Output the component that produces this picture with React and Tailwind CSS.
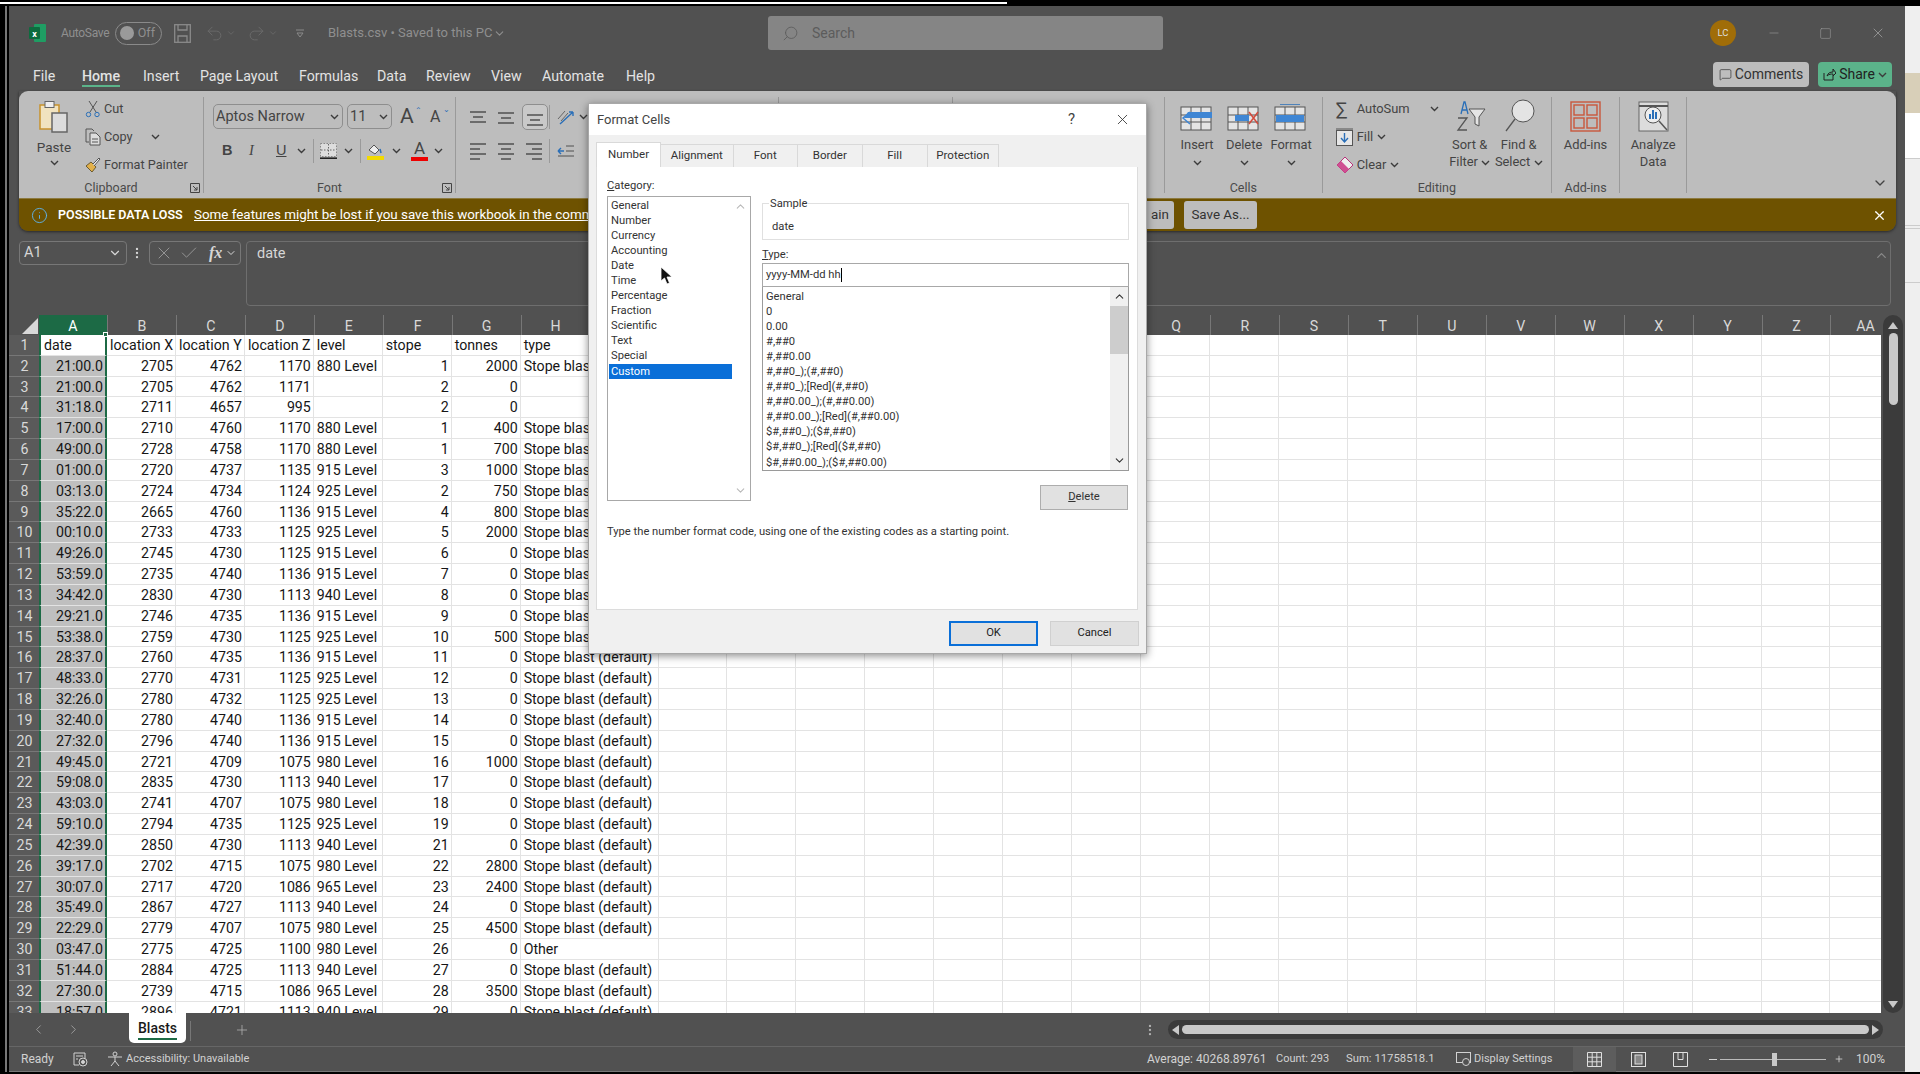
import React from "react";
import { ChevronDown, ChevronUp, ChevronLeft, ChevronRight, X, Minus, Plus, Square, Search, Undo2, Redo2, MessageSquare, Check, EllipsisVertical, Info } from "lucide-react";

const colNames = ["A","B","C","D","E","F","G","H","I","J","K","L","M","N","O","P","Q","R","S","T","U","V","W","X","Y","Z","AA"];
const sb = "Stope blast (default)";
const rows = [
  ["21:00.0",2705,4762,1170,"880 Level",1,2000,sb],
  ["21:00.0",2705,4762,1171,"",2,0,""],
  ["31:18.0",2711,4657,995,"",2,0,""],
  ["17:00.0",2710,4760,1170,"880 Level",1,400,sb],
  ["49:00.0",2728,4758,1170,"880 Level",1,700,sb],
  ["01:00.0",2720,4737,1135,"915 Level",3,1000,sb],
  ["03:13.0",2724,4734,1124,"925 Level",2,750,sb],
  ["35:22.0",2665,4760,1136,"915 Level",4,800,sb],
  ["00:10.0",2733,4733,1125,"925 Level",5,2000,sb],
  ["49:26.0",2745,4730,1125,"915 Level",6,0,sb],
  ["53:59.0",2735,4740,1136,"915 Level",7,0,sb],
  ["34:42.0",2830,4730,1113,"940 Level",8,0,sb],
  ["29:21.0",2746,4735,1136,"915 Level",9,0,sb],
  ["53:38.0",2759,4730,1125,"925 Level",10,500,sb],
  ["28:37.0",2760,4735,1136,"915 Level",11,0,sb],
  ["48:33.0",2770,4731,1125,"925 Level",12,0,sb],
  ["32:26.0",2780,4732,1125,"925 Level",13,0,sb],
  ["32:40.0",2780,4740,1136,"915 Level",14,0,sb],
  ["27:32.0",2796,4740,1136,"915 Level",15,0,sb],
  ["49:45.0",2721,4709,1075,"980 Level",16,1000,sb],
  ["59:08.0",2835,4730,1113,"940 Level",17,0,sb],
  ["43:03.0",2741,4707,1075,"980 Level",18,0,sb],
  ["59:10.0",2794,4735,1125,"925 Level",19,0,sb],
  ["42:39.0",2850,4730,1113,"940 Level",21,0,sb],
  ["39:17.0",2702,4715,1075,"980 Level",22,2800,sb],
  ["30:07.0",2717,4720,1086,"965 Level",23,2400,sb],
  ["35:49.0",2867,4727,1113,"940 Level",24,0,sb],
  ["22:29.0",2779,4707,1075,"980 Level",25,4500,sb],
  ["03:47.0",2775,4725,1100,"980 Level",26,0,"Other"],
  ["51:44.0",2884,4725,1113,"940 Level",27,0,sb],
  ["27:30.0",2739,4715,1086,"965 Level",28,3500,sb],
  ["18:57.0",2896,4721,1113,"940 Level",29,0,sb],
];
const categories = ["General","Number","Currency","Accounting","Date","Time","Percentage","Fraction","Scientific","Text","Special","Custom"];
const formats = ["General","0","0.00","#,##0","#,##0.00","#,##0_);(#,##0)","#,##0_);[Red](#,##0)","#,##0.00_);(#,##0.00)","#,##0.00_);[Red](#,##0.00)","$#,##0_);($#,##0)","$#,##0_);[Red]($#,##0)","$#,##0.00_);($#,##0.00)"];
const dialogTabs = [["Alignment","w-[72.5px]"],["Font","w-[64.5px]"],["Border","w-[64.6px]"],["Fill","w-[65px]"],["Protection","w-[71.4px]"]];
const menuTabs = [["File","w-[49px]"],["Home","w-[61px]"],["Insert","w-[57px]"],["Page Layout","w-[99px]"],["Formulas","w-[78px]"],["Data","w-[49px]"],["Review","w-[65px]"],["View","w-[51px]"],["Automate","w-[84px]"],["Help","w-[40px]"]];

const Chev = ({ className = "" }) => (
  <svg width="9" height="6" viewBox="0 0 9 6" className={className} fill="none" stroke="#3c3c3c" strokeWidth="1.4"><path d="M1 1l3.5 3.5L8 1" /></svg>
);

const Lines = ({ widths, bold }) => (
  <svg width="20" height="18" viewBox="0 0 20 18" stroke="#505050" strokeWidth="1.5">
    {widths.map((w, i) => (
      <line key={i} x1={w[0]} x2={w[1]} y1={bold + i * 5} y2={bold + i * 5} />
    ))}
  </svg>
);

const GridIcon = ({ children }) => (
  <svg width="34" height="28" viewBox="0 0 34 28" fill="none">
    <rect x="1" y="3" width="30" height="23" fill="#e4e4e4" stroke="#555" />
    <path d="M11 3v23M21 3v23M1 11h30M1 18h30" stroke="#555" />
    {children}
  </svg>
);

const RibbonGroup = ({ className, label, launcher, children }) => (
  <div className={`h-[96px] mt-[6px] border-r border-[#9a9a9a] flex flex-col shrink-0 relative ${className}`}>
    <div className="flex-1 flex min-h-0">{children}</div>
    <div className="h-[10px] leading-[10px] text-center text-[12.5px] text-[#4a4a4a]">{label}</div>
    {launcher && (
      <svg width="10" height="10" viewBox="0 0 10 10" fill="none" stroke="#444" className="absolute right-[3px] bottom-[0px]">
        <path d="M.5 9.5V.5h9v9zM3 3l4 4M7 4v3H4" />
      </svg>
    )}
  </div>
);

const BigBtn = ({ icon, lines, className }) => (
  <div className={`flex flex-col items-center shrink-0 ${className}`}>
    <div className="h-[32px] mt-[3px] flex items-end">{icon}</div>
    <div className="mt-[4px] text-[12.9px] leading-[17px] text-center text-[#444] whitespace-nowrap">{lines}</div>
  </div>
);

function Ribbon() {
  return (
    <div className="h-[107px] bg-[#bdbdbd] rounded-t-[9px] flex relative">
      <RibbonGroup className="w-[185px]" label="Clipboard" launcher>
        <div className="ml-[15px] w-[40px] flex flex-col items-center">
          <svg width="30" height="34" viewBox="0 0 30 34" fill="none" className="mt-[3px]">
            <rect x="1" y="5" width="19" height="24" fill="#f1e3bf" stroke="#c8922c" strokeWidth="1.5" />
            <rect x="6" y="1.5" width="9" height="6" fill="#eee" stroke="#666" />
            <rect x="13" y="13" width="15" height="19" fill="#dcdcdc" stroke="#666" strokeWidth="1.5" />
          </svg>
          <div className="mt-[5px] text-[13.5px] leading-[16px] text-[#444]">Paste</div>
          <Chev className="mt-[5px]" />
        </div>
        <div className="ml-[11px] flex flex-col gap-[4px] text-[#444] text-[12.7px] whitespace-nowrap">
          <div className="h-[24px] flex items-center">
            <svg width="16" height="18" viewBox="0 0 16 18" fill="none" stroke="#555" className="mr-[3px]">
              <path d="M4 1l7 11M12 1L5 12" /><circle cx="3.5" cy="14.5" r="2.2" stroke="#2a6fb8" /><circle cx="12" cy="14.5" r="2.2" stroke="#2a6fb8" />
            </svg>
            Cut
          </div>
          <div className="h-[24px] flex items-center">
            <svg width="16" height="18" viewBox="0 0 16 18" fill="none" stroke="#555" className="mr-[3px]">
              <path d="M4 14H1V1h6l2 2" /><path d="M5 5h6l4 4v8H5zM7 11h6M7 14h6" fill="#ddd" />
            </svg>
            Copy
            <Chev className="ml-[18px]" />
          </div>
          <div className="h-[24px] flex items-center">
            <svg width="16" height="16" viewBox="0 0 16 16" fill="none" className="mr-[3px]">
              <path d="M1 9l6 6 4-5-5-5z" fill="#e2b04a" stroke="#6a5a30" /><path d="M8 7l6-6 1 1-6 7" fill="#eee" stroke="#555" />
            </svg>
            Format Painter
          </div>
        </div>
      </RibbonGroup>

      <RibbonGroup className="w-[252px]" label="Font" launcher>
        <div className="pl-[9px] pt-[7px] flex flex-col text-[#444]">
          <div className="flex items-center h-[25px]">
            <div className="w-[130px] h-[25px] border border-[#8e8e8e] rounded-[5px] flex items-center justify-between px-[2px] text-[14.5px]">
              <span className="whitespace-nowrap">Aptos Narrow</span><Chev className="mr-[1px]" />
            </div>
            <div className="ml-[4px] w-[45px] h-[25px] border border-[#8e8e8e] rounded-[5px] flex items-center justify-between px-[2px] text-[14.5px]">
              <span>11</span><Chev className="mr-[1px]" />
            </div>
            <div className="ml-[8px] w-[17px] text-[21px] leading-none relative">A<span className="absolute right-[-5px] top-[1px] text-[8px] text-[#2a6fb8]">⌃</span></div>
            <div className="ml-[13px] w-[16px] text-[16px] leading-none relative">A<span className="absolute right-[-4px] top-[-3px] text-[8px] text-[#2a6fb8]">⌄</span></div>
          </div>
          <div className="flex items-center h-[24px] mt-[10px]">
            <span className="ml-[9px] w-[11px] font-bold text-[14.5px] font-['Liberation_Sans',sans-serif]">B</span>
            <span className="ml-[16px] w-[9px] italic text-[14.5px] font-['Liberation_Serif',serif]">I</span>
            <span className="ml-[18px] w-[11px] underline text-[14.5px] font-['Liberation_Sans',sans-serif]">U</span>
            <Chev className="ml-[10px]" />
            <div className="ml-[7px] w-px h-[24px] bg-[#9a9a9a]" />
            <svg width="17" height="16" viewBox="0 0 17 16" className="ml-[6px]" fill="none">
              <rect x=".5" y=".5" width="16" height="13" fill="#ddd" stroke="#888" strokeDasharray="1.5 1.5" />
              <path d="M8.5 1v12M1 7h15" stroke="#666" strokeDasharray="1.5 1.5" /><path d="M0 15.2h17" stroke="#222" strokeWidth="1.6" />
            </svg>
            <Chev className="ml-[7px]" />
            <div className="ml-[7px] w-px h-[24px] bg-[#9a9a9a]" />
            <svg width="17" height="18" viewBox="0 0 17 18" className="ml-[6px]" fill="none">
              <path d="M2 8l5-5 5 5-4 4z" fill="#eee" stroke="#555" /><path d="M13 7l1 4" stroke="#2a6fb8" strokeWidth="1.5" /><rect y="14" width="17" height="4" fill="#f2da00" />
            </svg>
            <Chev className="ml-[8px]" />
            <div className="ml-[10px] w-[17px] h-[20px] flex flex-col items-center text-[17px] leading-[15px]">
              A<div className="w-[17px] h-[4px] bg-[#ee0000] mt-[1px]" />
            </div>
            <Chev className="ml-[6px]" />
          </div>
        </div>
      </RibbonGroup>

      <RibbonGroup className="w-[322.6px]" label="Alignment">
        <div className="pl-[12px] pt-[7px] flex flex-col">
          <div className="flex items-center h-[25px]">
            <Lines widths={[[2, 18], [5, 15], [2, 18]]} bold={4} />
            <div className="ml-[8px]"><Lines widths={[[2, 18], [5, 15], [2, 18]]} bold={5} /></div>
            <div className="ml-[6px] w-[26px] h-[26px] border border-[#8e8e8e] rounded-[5px] bg-[#c9c9c9] flex items-center justify-center"><Lines widths={[[2, 18], [5, 15], [2, 18]]} bold={7} /></div>
            <div className="ml-[1px] w-px h-[24px] bg-[#9a9a9a]" />
            <svg width="19" height="18" viewBox="0 0 19 18" className="ml-[6px]" fill="none"><path d="M2 11l7-8M5 13l7-8" stroke="#666" /><path d="M4 16L17 4M17 4h-4M17 4v4" stroke="#2a6fb8" strokeWidth="1.4" /></svg>
            <Chev className="ml-[4px]" />
          </div>
          <div className="flex items-center h-[24px] mt-[10px]">
            <Lines widths={[[2, 18], [2, 12], [2, 18], [2, 12]]} bold={2} />
            <div className="ml-[8px]"><Lines widths={[[2, 18], [5, 15], [2, 18], [5, 15]]} bold={2} /></div>
            <div className="ml-[8px]"><Lines widths={[[2, 18], [8, 18], [2, 18], [8, 18]]} bold={2} /></div>
            <div className="ml-[5px] w-px h-[24px] bg-[#9a9a9a]" />
            <svg width="17" height="14" viewBox="0 0 17 14" className="ml-[7px]" fill="none" stroke="#505050"><path d="M9 2h8M9 7h8M1 12h16" /><path d="M1 7h6M1 7l3-3M1 7l3 3" stroke="#2a6fb8" strokeWidth="1.4" /></svg>
          </div>
        </div>
      </RibbonGroup>
      <RibbonGroup className="w-[174px]" label="" />
      <RibbonGroup className="w-[212.5px]" label="" />

      <RibbonGroup className="w-[157.6px]" label="Cells">
        <BigBtn className="ml-[11px] w-[42px]" icon={<GridIcon><path d="M4 14h28v-6H8z" fill="#3f86d4" /><path d="M10 8l-7 6 7 6" stroke="#3f86d4" strokeWidth="1.5" /></GridIcon>} lines={<>Insert<br /><Chev className="inline" /></>} />
        <BigBtn className="ml-[5px] w-[42px]" icon={<GridIcon><path d="M8 11h14v6H8z" fill="#3f86d4" /><path d="M22 8l9 12M31 8l-9 12" stroke="#d24a3c" strokeWidth="1.5" /></GridIcon>} lines={<>Delete<br /><Chev className="inline" /></>} />
        <BigBtn className="ml-[5px] w-[42px]" icon={<GridIcon><path d="M2 11h28v7H2z" fill="#3f86d4" /><path d="M6 0h20" stroke="#2a6fb8" strokeWidth="1.5" /></GridIcon>} lines={<>Format<br /><Chev className="inline" /></>} />
      </RibbonGroup>

      <RibbonGroup className="w-[229.4px]" label="Editing">
        <div className="ml-[13px] flex flex-col gap-[4px] text-[#444] text-[12.9px] whitespace-nowrap w-[104px]">
          <div className="h-[24px] flex items-center"><span className="w-[21px] text-[19px] leading-none">∑</span>AutoSum<Chev className="ml-[20px]" /></div>
          <div className="h-[24px] flex items-center">
            <svg width="18" height="18" viewBox="0 0 18 18" fill="none" className="mr-[3px]"><rect x=".5" y="2.5" width="16" height="15" fill="#e6e6e6" stroke="#555" /><path d="M0 1h17" stroke="#555" /><path d="M8.5 5v9M5 10l3.5 4L12 10" stroke="#2a6fb8" strokeWidth="1.4" /></svg>
            Fill<Chev className="ml-[4px]" />
          </div>
          <div className="h-[24px] flex items-center">
            <svg width="18" height="18" viewBox="0 0 18 18" fill="none" className="mr-[3px]"><path d="M9 1l8 8-8 8-8-8z" fill="#eee" stroke="#b8337a" /><path d="M5 5l8 8-4 4-8-8z" fill="#cf4f92" /></svg>
            Clear<Chev className="ml-[4px]" />
          </div>
        </div>
        <BigBtn className="w-[46px] ml-[7px]" icon={
          <svg width="34" height="32" viewBox="0 0 34 32" fill="none"><path d="M8 14l3-12h1l3 12M9 10h5" stroke="#2a6fb8" strokeWidth="1.3" /><path d="M5 18h9L5 30h9" stroke="#555" strokeWidth="1.3" /><path d="M16 9h16l-6 8v9l-4-2v-7z" fill="#e4e4e4" stroke="#555" /></svg>
        } lines={<>Sort &amp;<br />Filter <Chev className="inline" /></>} />
        <BigBtn className="w-[46px] ml-[3px]" icon={
          <svg width="34" height="34" viewBox="0 0 34 34" fill="none"><circle cx="21" cy="13" r="11" fill="#e4e4e4" stroke="#555" /><path d="M13 21L4 33" stroke="#555" strokeWidth="1.3" /></svg>
        } lines={<>Find &amp;<br />Select <Chev className="inline" /></>} />
      </RibbonGroup>

      <RibbonGroup className="w-[68px]" label="Add-ins">
        <BigBtn className="w-full" icon={
          <svg width="31" height="31" viewBox="0 0 31 31" fill="none" stroke="#c9573c" strokeWidth="1.4"><rect x="1" y="1" width="29" height="29" /><rect x="4" y="4" width="10" height="10" /><rect x="17" y="4" width="10" height="10" /><rect x="4" y="17" width="10" height="10" /><rect x="17" y="17" width="10" height="10" /></svg>
        } lines="Add-ins" />
      </RibbonGroup>
      <RibbonGroup className="w-[67px]" label="">
        <BigBtn className="w-full" icon={
          <svg width="31" height="31" viewBox="0 0 31 31" fill="none"><rect x="1" y="1" width="29" height="29" fill="#dcdcdc" stroke="#666" /><path d="M1 5h29" stroke="#555" strokeWidth="2" /><circle cx="15" cy="14" r="8" fill="#eee" stroke="#555" /><rect x="11" y="13" width="2" height="5" fill="#2a6fb8" /><rect x="14" y="9" width="2" height="9" fill="#2a6fb8" /><rect x="17" y="11" width="2" height="7" fill="#2a6fb8" /><path d="M21 20l8 9" stroke="#555" strokeWidth="1.5" /></svg>
        } lines={<>Analyze<br />Data</>} />
      </RibbonGroup>
      <div className="flex-1 flex items-end justify-end pr-[8px] pb-[7px]"><ChevronDown size={16} className="text-[#444]" /></div>
    </div>
  );
}

function FormatCells() {
  return (
    <div className="absolute left-[588px] top-[103px] w-[559px] h-[551px] bg-[#f0f0f0] shadow-[0_2px_8px_rgba(0,0,0,0.45)] border border-[#a8a8a8] flex flex-col text-[11.2px] text-[#333] font-['Roboto',sans-serif] z-10">
      <div className="h-[31px] shrink-0 bg-white flex items-center pl-[8px] text-[13px] text-[#444]">
        <span className="flex-1">Format Cells</span>
        <span className="w-[10px] text-[15px] mr-[36px]">?</span>
        <X size={17} strokeWidth={1.2} className="mr-[15px] text-[#333]" />
      </div>
      <div className="flex h-[25px] mt-[7px] ml-[7px] items-end shrink-0 text-[11.5px]">
        <div className="w-[65px] h-[25px] bg-white border border-b-0 border-[#d9d9d9] flex items-center justify-center">Number</div>
        {dialogTabs.map(([t, w]) => (
          <div key={t} className={`${w} h-[23px] bg-[#f0f0f0] border-t border-r border-[#d9d9d9] flex items-center justify-center`}>{t}</div>
        ))}
      </div>
      <div className="w-[542px] h-[443px] ml-[7px] bg-white border border-t-0 border-[#dcdcdc] flex flex-col shrink-0 pl-[10px] relative">
        <div className="flex">
          <div className="w-[144px] shrink-0">
            <div className="h-[12px] mt-[13px] leading-[12px]"><u>C</u>ategory:</div>
            <div className="mt-[4px] w-[144px] h-[305px] border border-[#a8a8a8] pl-[1px] pt-[1px] relative">
              {categories.map((c) => (
                <div key={c} className={`w-[123px] h-[15.05px] leading-[15px] pl-[2px] ${c === "Custom" ? "bg-[#0a6fd8] text-white" : ""}`}>{c}</div>
              ))}
              <ChevronUp size={13} className="absolute right-[3px] top-[3px] text-[#b9b9b9]" />
              <ChevronDown size={13} className="absolute right-[3px] bottom-[3px] text-[#b9b9b9]" />
            </div>
          </div>
          <div className="ml-[11px] w-[367px] shrink-0">
            <div className="h-[37px] mt-[36px] border border-[#e0e0e0] relative pl-[9px] pt-[15px] leading-[16px]">
              <span className="absolute left-[6px] top-[-6px] bg-white px-[1px] leading-[12px]">Sample</span>
              date
            </div>
            <div className="mt-[8px] h-[14px] leading-[14px]"><u>T</u>ype:</div>
            <div className="mt-[1px] h-[24px] border border-[#a8a8a8] flex items-center pl-[3px]">yyyy-MM-dd hh<span className="w-px h-[14px] bg-black" /></div>
            <div className="h-[184px] border border-t-0 border-[#9a9a9a] pl-[3px] pt-[2px] relative">
              {formats.map((f) => (
                <div key={f} className="h-[15.05px] leading-[15px] whitespace-nowrap">{f}</div>
              ))}
              <div className="absolute right-0 top-0 bottom-0 w-[18px] bg-[#f0f0f0] flex flex-col items-center">
                <ChevronUp size={13} className="mt-[3px] text-[#333]" />
                <div className="w-full h-[48px] bg-[#cdcdcd] mt-[3px]" />
                <div className="flex-1" />
                <ChevronDown size={13} className="mb-[3px] text-[#333]" />
              </div>
            </div>
            <div className="flex justify-end mt-[14px] mr-[1px]">
              <div className="w-[88px] h-[25px] bg-[#e1e1e1] border border-[#adadad] flex items-center justify-center"><u>D</u>elete</div>
            </div>
          </div>
        </div>
        <div className="absolute left-[10px] top-[357px] whitespace-nowrap leading-[16px]">Type the number format code, using one of the existing codes as a starting point.</div>
      </div>
      <div className="flex justify-end gap-[12px] mt-[11px] mr-[7px]">
        <div className="w-[89px] h-[25px] bg-[#e1e1e1] border-2 border-[#0a6fd8] flex items-center justify-center text-[#222]">OK</div>
        <div className="w-[89px] h-[25px] bg-[#e1e1e1] border border-[#d0d0d0] flex items-center justify-center text-[#222]">Cancel</div>
      </div>
    </div>
  );
}

function Sheet() {
  return (
    <div className="h-[698px] flex">
      <div className="w-[1872px] overflow-hidden shrink-0 font-['Roboto',sans-serif] text-[14.2px]">
        <div className="h-[20px] flex text-[#d9d9d9] leading-[22px]">
          <div className="w-[30px] shrink-0 relative">
            <svg width="16" height="16" viewBox="0 0 16 16" className="absolute right-[1px] bottom-[1px]"><path d="M16 0v16H0z" fill="#d8d8d8" /></svg>
          </div>
          {colNames.map((c, i) => (
            <div key={c} className={`${i === 0 ? "w-[68px] bg-[#1c6a45] text-white" : "w-[68.95px] border-l border-[#777]"} shrink-0 text-center`}>{c}</div>
          ))}
        </div>
        <Row num={1} head cells={["date","location X","location Y","location Z","level","stope","tonnes","type"]} />
        {rows.map((r, i) => <Row key={i} num={i + 2} cells={r} />)}
      </div>
      <div className="w-[20px] ml-[2px] bg-[#3b3b3b] rounded-full flex flex-col items-center shrink-0 pt-[7px] pb-[5px]">
        <svg width="10" height="7" viewBox="0 0 10 7"><path d="M5 0l5 7H0z" fill="#c9c9c9" /></svg>
        <div className="w-[9px] h-[72px] bg-[#c9c9c9] rounded-full mt-[4px]" />
        <div className="flex-1" />
        <svg width="10" height="7" viewBox="0 0 10 7"><path d="M5 7l5-7H0z" fill="#c9c9c9" /></svg>
      </div>
    </div>
  );
}

function Row({ num, cells, head }) {
  return (
    <div className="h-[20.83px] flex bg-white">
      <div className="w-[30px] shrink-0 bg-[#5a5a5a] border-b border-[#777] text-[#d9d9d9] text-center leading-[21px] pl-[1px]">{num}</div>
      {colNames.map((c, i) => {
        const v = cells[i];
        const leftAligned = head || i === 4 || i === 7;
        const overflow = i === 7 && v;
        const base = "shrink-0 h-full border-b border-[#e3e3e3] pl-[3px] pr-[2px] leading-[21px] text-[#161616] whitespace-nowrap";
        if (i === 0) {
          return (
            <div key={c} className={`${base} relative w-[68px] border-x-2 border-x-[#1c6a45] ${head ? "bg-white text-left" : "bg-[#bfbfbf] text-right"}`}>
              {v}
              {head && <span className="absolute right-[-3px] top-[-3px] w-[5px] h-[5px] bg-[#1c6a45] border border-white" />}
            </div>
          );
        }
        return (
          <div key={c} className={`${base} w-[68.95px] ${overflow ? "" : "border-r border-r-[#e3e3e3]"} ${leftAligned ? "text-left" : "text-right"}`}>
            {v}
          </div>
        );
      })}
    </div>
  );
}

export default function App() {
  return (
    <div className="relative w-[1920px] h-[1074px] bg-black overflow-hidden flex flex-col font-['Roboto',sans-serif]">
      <div className="h-[6px] shrink-0 pt-[2px]"><div className="w-[1007px] h-[2px] bg-white" /></div>
      <div className="h-[1066px] flex shrink-0">
        <div className="w-[9px] shrink-0 flex justify-end"><div className="w-[2px] bg-[#777] mr-[2px]" /></div>
        <div className="w-[1896px] shrink-0 bg-[#515151] flex flex-col">
          {/* title bar */}
          <div className="h-[54px] shrink-0 flex items-center text-[13px] text-[#8f8f8f]">
            <svg width="17" height="20" viewBox="0 0 17 20" className="ml-[20px]">
              <rect x="5" y="1" width="12" height="18" rx="1" fill="#1f9d63" />
              <rect x="0" y="4" width="11" height="12" rx="1" fill="#0d6b3e" />
              <text x="5.5" y="13.5" fontSize="9" fontWeight="700" textAnchor="middle" fill="#fff">x</text>
            </svg>
            <span className="ml-[15px] w-[48px] text-[12px] tracking-tight">AutoSave</span>
            <div className="ml-[6px] w-[47px] h-[23px] rounded-full border border-[#8a8a8a] flex items-center justify-between pl-[4px] pr-[6px]">
              <div className="w-[14px] h-[14px] rounded-full bg-[#9a9a9a]" /><span className="text-[12.5px]">Off</span>
            </div>
            <svg width="17" height="19" viewBox="0 0 17 19" fill="none" stroke="#8a8a8a" strokeWidth="1.3" className="ml-[12px]"><rect x=".7" y=".7" width="15.6" height="17.6" /><path d="M4 1v5h9V1M4 18v-6h9v6" /></svg>
            <Undo2 size={19} strokeWidth={1.2} className="ml-[14px] text-[#6a6a6a]" />
            <ChevronDown size={10} className="ml-[2px] text-[#6a6a6a]" />
            <Redo2 size={19} strokeWidth={1.2} className="ml-[11px] text-[#6a6a6a]" />
            <ChevronDown size={10} className="ml-[2px] text-[#6a6a6a]" />
            <svg width="10" height="9" viewBox="0 0 10 9" fill="none" stroke="#8a8a8a" className="ml-[17px]"><path d="M1 1h8M2 4l3 4 3-4z" /></svg>
            <span className="ml-[23px] whitespace-nowrap w-[163px]">Blasts.csv • Saved to this PC</span>
            <ChevronDown size={13} className="ml-[2px]" />
            <div className="ml-[262px] w-[395px] h-[34px] bg-[#858585] rounded-[3px] flex items-center pl-[14px] text-[#5c5c5c]">
              <Search size={17} strokeWidth={1.2} className="-scale-x-100" /><span className="ml-[13px] text-[14px]">Search</span>
            </div>
            <div className="ml-[547px] w-[26px] h-[26px] rounded-full bg-[#a06d08] flex items-center justify-center text-[9.5px] text-[#ddd]">LC</div>
            <Minus size={14} strokeWidth={1} className="ml-[31px] text-[#a0a0a0]" />
            <Square size={13} strokeWidth={1} className="ml-[38px] text-[#a0a0a0]" />
            <X size={16} strokeWidth={1.2} className="ml-[38px] text-[#a0a0a0]" />
          </div>
          {/* tabs */}
          <div className="h-[31px] shrink-0 flex text-[14.2px] text-[#e3e3e3] pl-[24px]">
            {menuTabs.map(([t, w]) => (
              <div key={t} className={`${w} shrink-0 h-[27px] leading-[33px] whitespace-nowrap`}>
                <span className={t === "Home" ? "inline-block h-[27px] font-medium border-b-2 border-[#5bb38a]" : ""}>{t}</span>
              </div>
            ))}
            <div className="flex-1" />
            <div className="w-[96px] h-[25px] mt-[2px] bg-[#bdbdbd] rounded-[4px] flex items-center justify-center text-[#333] text-[14px]"><MessageSquare size={13} strokeWidth={1.3} className="mr-[3px]" />Comments</div>
            <div className="w-[74px] h-[25px] mt-[2px] ml-[9px] mr-[13px] bg-[#5bb38a] rounded-[4px] flex items-center justify-center text-[#222] text-[14px]">
              <svg width="13" height="13" viewBox="0 0 13 13" fill="none" stroke="#222" className="mr-[3px]"><path d="M1 5v7h9V8M4 8c1-3 3-4 6-4V1l3 4-3 3V6c-2 0-4 0-6 2z" /></svg>
              Share<Chev className="ml-[3px]" />
            </div>
          </div>
          {/* ribbon + message bar */}
          <div className="ml-[10px] w-[1877px] shrink-0 shadow-[0_1px_3px_rgba(0,0,0,0.5)] rounded-b-[9px]">
            <Ribbon />
            <div className="h-[33px] bg-[#6e5200] rounded-b-[9px] flex items-center text-white text-[13.4px] relative border-t border-[#8c7a40]">
              <Info size={17} strokeWidth={1.3} className="ml-[12px] text-[#5fb4ee]" />
              <span className="ml-[10px] w-[126px] text-[12.5px] font-semibold whitespace-nowrap">POSSIBLE DATA LOSS</span>
              <span className="ml-[10px] underline whitespace-nowrap w-[420px] overflow-hidden">Some features might be lost if you save this workbook in the comma-delimited (.csv) format.</span>
              <div className="ml-[520px] w-[40px] h-[28px] bg-[#bdbdbd] rounded-[3px] text-[#333] flex items-center justify-end pr-[5px]">ain</div>
              <div className="ml-[10px] w-[73px] h-[28px] bg-[#bdbdbd] rounded-[3px] text-[#333] flex items-center justify-center whitespace-nowrap">Save As...</div>
              <div className="flex-1" />
              <X size={15} className="mr-[9px]" />
            </div>
          </div>
          {/* formula bar */}
          <div className="ml-[10px] mt-[10px] h-[65px] shrink-0 flex text-[#d6d6d6] text-[14.5px]">
            <div className="w-[108px] h-[24px] border border-[#777] rounded-[4px] flex items-center justify-between px-[4px]">A1<ChevronDown size={14} /></div>
            <EllipsisVertical size={14} className="mt-[5px] ml-[3px]" />
            <div className="ml-[5px] w-[92px] h-[24px] border border-[#777] rounded-[4px] flex items-center pl-[4px]">
              <X size={20} strokeWidth={1.1} className="text-[#9a9a9a]" />
              <Check size={20} strokeWidth={1.1} className="ml-[5px] text-[#9a9a9a]" />
              <span className="ml-[10px] italic font-['Liberation_Serif',serif] text-[16px] font-bold">fx</span>
              <ChevronDown size={12} className="ml-[3px]" />
            </div>
            <div className="ml-[5px] flex-1 mr-[14px] border border-[#6e6e6e] rounded-[4px] pl-[10px] pt-[1px] relative">date<ChevronUp size={15} className="absolute right-[1px] top-[6px] text-[#8a8a8a]" /></div>
          </div>
          <div className="h-[9px] shrink-0" />
          <Sheet />
          {/* sheet tabs */}
          <div className="h-[34px] shrink-0 flex text-[#b0b0b0] border-b border-[#666] relative">
            <ChevronLeft size={15} strokeWidth={1.2} className="ml-[22px] mt-[9px]" />
            <ChevronRight size={15} strokeWidth={1.2} className="ml-[20px] mt-[9px]" />
            <div className="ml-[48px] w-[57px] h-[30px] bg-white rounded-b-[5px] flex flex-col items-center text-[#1a1a1a] text-[14px] font-medium pt-[6px] leading-[18px]">
              Blasts<div className="w-[39px] h-[2px] bg-[#1c6a45] mt-[1px]" />
            </div>
            <div className="ml-[4px] mt-[8px] w-px h-[20px] bg-[#777]" />
            <Plus size={16} strokeWidth={1.2} className="ml-[43px] mt-[9px]" />
            <EllipsisVertical size={14} className="ml-[893px] mt-[10px]" />
            <div className="ml-[11px] mt-[7px] w-[715px] h-[19px] bg-[#3b3b3b] rounded-full flex items-center px-[4px]">
              <svg width="7" height="10" viewBox="0 0 7 10"><path d="M0 5l7-5v10z" fill="#c9c9c9" /></svg>
              <div className="flex-1 h-[9px] bg-[#c9c9c9] rounded-full mx-[3px]" />
              <svg width="7" height="10" viewBox="0 0 7 10"><path d="M7 5L0 0v10z" fill="#c9c9c9" /></svg>
            </div>
          </div>
          {/* status bar */}
          <div className="h-[25px] shrink-0 flex items-center text-[11px] text-[#d2d2d2] whitespace-nowrap border-b border-[#777]">
            <span className="ml-[12px] text-[12px] w-[31px]">Ready</span>
            <svg width="15" height="15" viewBox="0 0 15 15" fill="none" stroke="#d2d2d2" className="ml-[21px]"><path d="M1 1h11v5M1 1v12h5M3 4h7M3 7h2" /><circle cx="10" cy="10" r="4" /><circle cx="10" cy="10" r="1.5" fill="#d2d2d2" /></svg>
            <svg width="16" height="16" viewBox="0 0 16 16" fill="none" stroke="#d2d2d2" className="ml-[19px]"><circle cx="8" cy="3" r="2" /><path d="M1 6h14M8 6v4l-4 5M8 10l4 5" /></svg>
            <span className="ml-[3px] w-[123px]">Accessibility: Unavailable</span>
            <span className="ml-[898px] w-[112px] text-[12px]">Average: 40268.89761</span>
            <span className="ml-[17px] w-[54px]">Count: 293</span>
            <span className="ml-[16px] w-[88px] text-[11.3px]">Sum: 11758518.1</span>
            <svg width="16" height="16" viewBox="0 0 16 16" fill="none" stroke="#d2d2d2" className="ml-[22px]"><rect x=".5" y="1.5" width="14" height="10" /><circle cx="10" cy="11" r="3.5" fill="#515151" /></svg>
            <span className="ml-[2px] w-[80px]">Display Settings</span>
            <div className="ml-[19px] w-[43px] h-[25px] bg-[#5d5d5d] flex items-center justify-center">
              <svg width="15" height="15" viewBox="0 0 15 15" fill="none" stroke="#e0e0e0"><path d="M.5.5h14v14H.5zM5.2.5v14M9.8.5v14M.5 5.2h14M.5 9.8h14" /></svg>
            </div>
            <svg width="15" height="15" viewBox="0 0 15 15" fill="none" stroke="#e0e0e0" className="ml-[15px]"><rect x=".5" y=".5" width="14" height="14" /><rect x="4" y="3" width="7" height="9" fill="#888" /></svg>
            <svg width="15" height="15" viewBox="0 0 15 15" fill="none" stroke="#e0e0e0" className="ml-[27px]"><path d="M.5.5h14v14H.5zM5 .5v7h5v-7" /></svg>
            <div className="ml-[21px] w-[8px] h-px bg-[#d2d2d2]" />
            <div className="ml-[3px] w-[106px] h-[1px] bg-[#bbb] relative">
              <div className="absolute left-[52px] top-[-6px] w-[5px] h-[13px] bg-[#c9c9c9]" />
            </div>
            <Plus size={10} className="ml-[8px]" />
            <span className="ml-[12px] text-[12px]">100%</span>
          </div>
        </div>
        <div className="flex-1 bg-[#efefef] flex flex-col pt-[67px]">
          <div className="h-[40px] bg-[#d8cfb8]" />
          <div className="h-[45px] bg-white" />
          <div className="h-[68px] border-y border-[#ccc]" />
          <div className="h-[55px] mt-[2px] border-y border-[#ccc]" />
        </div>
      </div>
      <div className="h-[2px]" />
      <FormatCells />
      <svg width="13" height="19" viewBox="0 0 13 19" className="absolute left-[660px] top-[266px] z-20">
        <path d="M1 1v14l3.5-3 2.5 6 2.5-1-2.5-6H12z" fill="#111" stroke="#fff" strokeWidth=".8" />
      </svg>
    </div>
  );
}
